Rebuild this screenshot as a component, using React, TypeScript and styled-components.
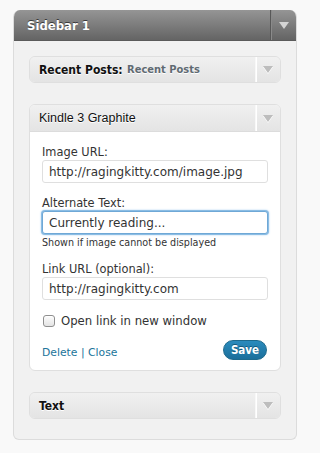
import React from 'react';
import styled, { createGlobalStyle } from 'styled-components';

const GlobalStyle = createGlobalStyle`
  body {
    margin: 0;
    background: #f9f9f9;
    font-family: "DejaVu Sans", "Liberation Sans", sans-serif;
  }
`;

const boldFace = '"DejaVu Sans Condensed", "DejaVu Sans", sans-serif';

const Page = styled.div`
  padding: 10px 14px 12px 13px;
`;

const Sidebar = styled.div`
  width: 284px;
  box-sizing: border-box;
  background: #f1f1f1;
  border: 1px solid #dcdcdc;
  border-top: none;
  border-radius: 7px 7px 6px 6px;
  overflow: hidden;
`;

const SidebarHeader = styled.div`
  display: flex;
  height: 31px;
  background: linear-gradient(to bottom, #959595 0%, #7a7a7a 55%, #646464 100%);
  border-bottom: 1px solid #5a5a5a;
  box-sizing: border-box;
`;

const SidebarTitle = styled.div`
  flex: 1;
  display: flex;
  align-items: center;
  padding-left: 13px;
  color: #fff;
  font-family: ${boldFace};
  font-weight: bold;
  font-size: 13px;
  text-shadow: 0 -1px 0 #3a3a3a;
`;

const ArrowCell = styled.div<{ dark?: boolean }>`
  width: ${(p) => (p.dark ? 25 : 24)}px;
  display: flex;
  align-items: center;
  justify-content: center;
  border-left: 1px solid ${(p) => (p.dark ? '#585858' : '#f8f8f8')};
  box-shadow: ${(p) => (p.dark ? 'inset 1px 0 0 #8a8a8a' : 'inset 1px 0 0 #fff')};
`;

const Arrow = styled.div<{ dark?: boolean }>`
  width: 0;
  height: 0;
  border-left: 5px solid transparent;
  border-right: 5px solid transparent;
  border-top: 7px solid ${(p) => (p.dark ? '#d4d4d4' : '#bdbdbd')};
  filter: ${(p) => (p.dark ? 'none' : 'drop-shadow(0 1px 0 #fff)')};
`;

const SidebarBody = styled.div`
  display: flex;
  flex-direction: column;
  gap: 21px;
  padding: 15px 15px 20px 15px;
`;

const Widget = styled.div`
  border: 1px solid #dfdfdf;
  border-radius: 6px;
  overflow: hidden;
  background: #fff;
`;

const WidgetHeader = styled.div<{ open?: boolean }>`
  display: flex;
  height: ${(p) => (p.open ? 26 : 25)}px;
  background: linear-gradient(to bottom, #f0f0f0 0%, #e4e4e4 100%);
  border-bottom: ${(p) => (p.open ? '1px solid #dcdcdc' : 'none')};
`;

const WidgetTitle = styled.div<{ plain?: boolean }>`
  flex: 1;
  display: flex;
  align-items: center;
  padding-left: 9px;
  color: #111;
  font-family: ${(p) => (p.plain ? '"Liberation Sans", Arial, sans-serif' : boldFace)};
  font-weight: ${(p) => (p.plain ? 'normal' : 'bold')};
  font-size: ${(p) => (p.plain ? 12.5 : 12)}px;
  text-shadow: 0 1px 0 #fff;
`;

const InTitle = styled.span`
  color: #5f6a72;
  font-size: 11px;
  margin-left: 1px;
`;

const WidgetBody = styled.div`
  display: flex;
  flex-direction: column;
  padding: 12px 12px 10px 12px;
`;

const Label = styled.label`
  display: block;
  font-size: 11.4px;
  line-height: 16px;
  color: #333;
`;

const Field = styled.div`
  display: flex;
  flex-direction: column;
  margin-bottom: 12px;
`;

const Input = styled.input<{ focused?: boolean }>`
  box-sizing: border-box;
  width: 226px;
  height: 23px;
  margin: 0;
  padding: 0 6px;
  font-family: "DejaVu Sans", sans-serif;
  font-size: 12px;
  color: #333;
  background: #fff;
  border: 1px solid ${(p) => (p.focused ? '#6fa8d6' : '#dfdfdf')};
  border-radius: 3px;
  outline: none;
  box-shadow: ${(p) => (p.focused ? '0 0 0 1px #8bbde4, 0 0 2px 1px #a9cff0' : 'none')};
`;

const Hint = styled.small`
  display: block;
  font-size: 9.6px;
  line-height: 13px;
  margin-top: 2px;
  color: #333;
`;

const CheckRow = styled.label`
  display: flex;
  align-items: center;
  gap: 6px;
  margin-top: 2px;
  font-size: 11.7px;
  color: #333;
`;

const Check = styled.span`
  width: 10px;
  height: 10px;
  margin-left: 1px;
  border: 1px solid #8f8f8f;
  border-radius: 3px;
  background: linear-gradient(to bottom, #fdfdfd, #e4e4e4);
  box-shadow: inset 0 1px 1px #fff;
`;

const Actions = styled.div`
  display: flex;
  align-items: center;
  justify-content: space-between;
  margin-top: 12px;
  padding-right: 1px;
`;

const Links = styled.div`
  font-size: 10.8px;
  color: #21759b;
  padding-top: 4px;
`;

const Link = styled.a`
  color: #21759b;
  text-decoration: none;
`;

const SaveButton = styled.button`
  width: 44px;
  height: 20px;
  padding: 0;
  border: 1px solid #1e6a8d;
  border-radius: 11px;
  background: linear-gradient(to bottom, #2a8bbd, #1c6f9b);
  color: #fff;
  font-family: ${boldFace};
  font-weight: bold;
  font-size: 11.5px;
  text-shadow: 0 -1px 0 #135a7c;
`;

export default function App() {
  return (
    <>
      <GlobalStyle />
      <Page>
        <Sidebar>
          <SidebarHeader>
            <SidebarTitle>Sidebar 1</SidebarTitle>
            <ArrowCell dark>
              <Arrow dark />
            </ArrowCell>
          </SidebarHeader>
          <SidebarBody>
            <Widget>
              <WidgetHeader>
                <WidgetTitle>
                  Recent Posts:<InTitle>&nbsp;Recent Posts</InTitle>
                </WidgetTitle>
                <ArrowCell>
                  <Arrow />
                </ArrowCell>
              </WidgetHeader>
            </Widget>

            <Widget>
              <WidgetHeader open>
                <WidgetTitle plain>Kindle 3 Graphite</WidgetTitle>
                <ArrowCell>
                  <Arrow />
                </ArrowCell>
              </WidgetHeader>
              <WidgetBody>
                <Field>
                  <Label>Image URL:</Label>
                  <Input defaultValue="http://ragingkitty.com/image.jpg" />
                </Field>
                <Field>
                  <Label>Alternate Text:</Label>
                  <Input focused defaultValue="Currently reading..." />
                  <Hint>Shown if image cannot be displayed</Hint>
                </Field>
                <Field>
                  <Label>Link URL (optional):</Label>
                  <Input defaultValue="http://ragingkitty.com" />
                </Field>
                <CheckRow>
                  <Check />
                  Open link in new window
                </CheckRow>
                <Actions>
                  <Links>
                    <Link>Delete</Link> | <Link>Close</Link>
                  </Links>
                  <SaveButton>Save</SaveButton>
                </Actions>
              </WidgetBody>
            </Widget>

            <Widget>
              <WidgetHeader>
                <WidgetTitle>Text</WidgetTitle>
                <ArrowCell>
                  <Arrow />
                </ArrowCell>
              </WidgetHeader>
            </Widget>
          </SidebarBody>
        </Sidebar>
      </Page>
    </>
  );
}
